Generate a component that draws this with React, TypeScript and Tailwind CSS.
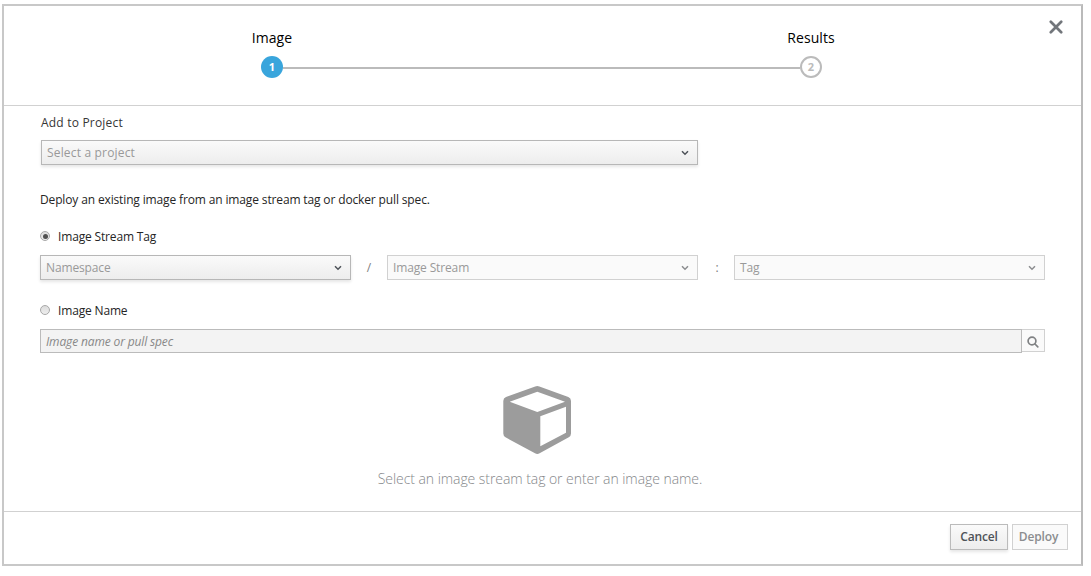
import { useState } from "react";

function Chevron({ className }: { className: string }) {
  return (
    <svg className={className} width="8" height="6" viewBox="0 0 8 6" fill="none" stroke="currentColor" strokeWidth="1.5">
      <path d="M1 1.2 4 4.2 7 1.2" />
    </svg>
  );
}

function Select({ label, disabled, className }: { label: string; disabled?: boolean; className: string }) {
  const look = disabled
    ? "border-[#d1d1d1] bg-[#fafafa]"
    : "border-[#b7b7b7] bg-linear-to-b from-[#fafafa] to-[#ededed] shadow-[0_2px_3px_rgba(3,3,3,0.1)]";
  return (
    <button type="button" disabled={disabled} className={`flex h-[25px] items-center justify-between border pl-[5px] pr-2 text-[12px] font-medium text-[#999] ${look} ${className}`}>
      <span>{label}</span>
      <Chevron className={disabled ? "text-[#8b8d8f]" : "text-[#4d5258]"} />
    </button>
  );
}

function Radio({ label, checked, onSelect }: { label: string; checked: boolean; onSelect: () => void }) {
  return (
    <button type="button" role="radio" aria-checked={checked} onClick={onSelect} className="flex h-[18px] items-center text-[12px] tracking-[-0.16px] text-[#252525]">
      <span className="mb-[2px] mr-2 flex size-[10px] items-center justify-center rounded-full border border-[#a8a8a8] bg-linear-to-b from-[#dcdcdc] to-[#eee]">
        {checked && <span className="size-[5px] rounded-full bg-[#505050]" />}
      </span>
      {label}
    </button>
  );
}

export default function App() {
  const [source, setSource] = useState("tag");
  return (
    <div className="h-[576px] w-[1091px] bg-white pl-[2px] pt-1 font-['Open_Sans',sans-serif]">
      <div className="flex h-[562px] w-[1081px] flex-col border-2 border-[#c8c8c8] border-r-[#bababa] bg-white">
        <header className="flex h-[100px] shrink-0 border-b border-[#d1d1d1] pl-[228px] pt-[21px]">
          <div className="flex w-[80px] flex-col items-center">
            <span className="h-[22px] text-[14px] leading-[22px] tracking-[0.05px] text-black">Image</span>
            <span className="mt-[7px] flex size-[22px] items-center justify-center rounded-full bg-[#39a5dc] text-[11px] font-bold text-white">1</span>
          </div>
          <div className="-mx-[29px] mt-[40px] h-[2px] w-[517px] bg-[#bbb]" />
          <div className="flex w-[80px] flex-col items-center">
            <span className="h-[22px] text-[14px] leading-[22px] tracking-[0.05px] text-black">Results</span>
            <span className="mt-[7px] flex size-[22px] items-center justify-center rounded-full border-2 border-[#bbb] bg-white text-[11px] font-bold text-[#bbb]">2</span>
          </div>
          <button type="button" aria-label="Close" className="-mt-[7px] ml-auto mr-[18px] h-[14px]">
            <svg width="14" height="14" viewBox="0 0 14 14" stroke="#72767b" strokeWidth="2.7" strokeLinecap="round">
              <path d="M1.8 1.8 12.2 12.2M12.2 1.8 1.8 12.2" />
            </svg>
          </button>
        </header>

        <main className="flex flex-1 flex-col pl-9 pr-[34px]">
          <label className="ml-px mt-[8px] h-[18px] text-[12px] font-medium leading-[18px] tracking-[0.2px] text-[#363636]">Add to Project</label>
          <Select label="Select a project" className="ml-px mt-[8px] w-[657px] tracking-[0.17px]" />
          <p className="mt-[26px] h-[18px] text-[12px] leading-[18px] tracking-[-0.14px] text-[#252525]">Deploy an existing image from an image stream tag or docker pull spec.</p>
          <div className="mt-[19px] flex">
            <Radio label="Image Stream Tag" checked={source === "tag"} onSelect={() => setSource("tag")} />
          </div>
          <div className="mt-[9px] flex h-[25px] items-center text-[12px] text-[#808080]">
            <Select label="Namespace" className="w-[311px] tracking-[-0.14px]" />
            <span className="w-[36px] text-center">/</span>
            <Select label="Image Stream" disabled className="w-[311px] tracking-[-0.14px]" />
            <span className="w-[36px] pl-[2px] text-center">:</span>
            <Select label="Tag" disabled className="w-[311px] tracking-[-0.14px]" />
          </div>
          <div className="mt-[22px] flex">
            <Radio label="Image Name" checked={source === "name"} onSelect={() => setSource("name")} />
          </div>
          <div className="mt-[9px] flex items-start">
            <div className="flex h-[24px] w-[982px] items-center border border-[#bbb] bg-[#f3f3f3] pl-[5px] pt-[2px] text-[12px] italic tracking-[-0.14px] text-[#888]">Image name or pull spec</div>
            <button type="button" aria-label="Search" className="flex h-[23px] w-[23px] items-center justify-center border border-l-0 border-[#d1d1d1] bg-[#fafafa] pt-[2px]">
              <svg width="12" height="12" viewBox="0 0 12 12" fill="none" stroke="#808284" strokeWidth="1.7" strokeLinecap="round">
                <circle cx="5" cy="5" r="3.9" />
                <path d="m8 8 2.8 2.8" />
              </svg>
            </button>
          </div>
          <div className="mt-[33px] flex w-[994px] flex-col items-center">
            <svg width="68" height="68" viewBox="0 0 68 68">
              <path fill="#9c9c9c" fillRule="evenodd" d="M32.2.5Q34.3-.3 36.4.5L65.3 11Q68 12 68 14.9V47.5Q68 50 65.8 51.3L36.6 67.3Q34.3 68.5 32 67.3L2.5 51.3Q.3 50 .3 47.5V14.9Q.3 12 3 11ZM34.3 5.7 6.7 15.7 34.3 26 62 15.7ZM37.3 30.3V60.3L63 46.7V20.7Z" />
            </svg>
            <p className="relative left-[3px] mt-[14px] text-[14px] font-light leading-[22px] tracking-[-0.06px] text-[#85878a]">Select an image stream tag or enter an image name.</p>
          </div>
        </main>

        <footer className="flex h-[53px] shrink-0 items-start justify-end gap-1 border-t border-[#d1d1d1] pr-[13px] pt-3 text-[12px] font-semibold tracking-[-0.15px]">
          <button type="button" className="h-[26px] w-[58px] border border-[#bbb] bg-linear-to-b from-[#fafafa] to-[#ededed] text-[#4d5258] shadow-[0_2px_3px_rgba(3,3,3,0.1)]">Cancel</button>
          <button type="button" disabled className="h-[26px] w-[56px] border border-[#d1d1d1] bg-[#fafafa] pr-[3px] text-[#8b8d8f]">Deploy</button>
        </footer>
      </div>
    </div>
  );
}
